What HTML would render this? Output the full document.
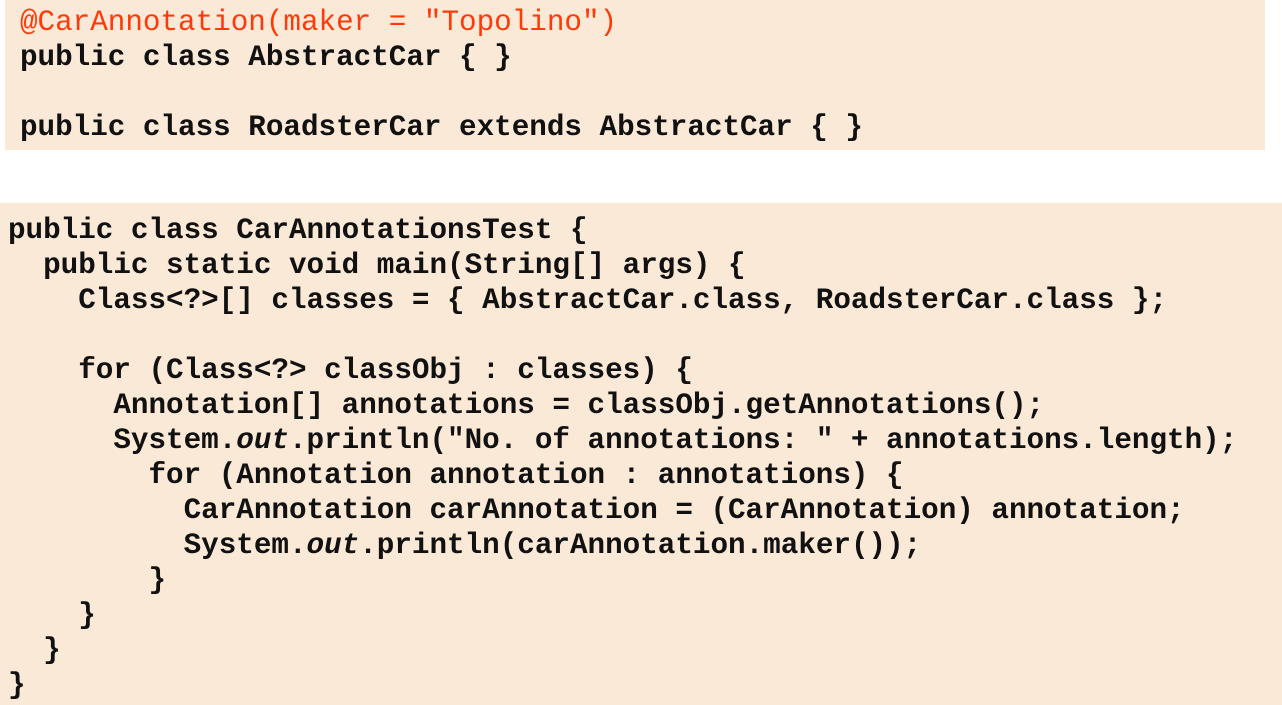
<!DOCTYPE html>
<html><head><style>
html,body{margin:0;padding:0;background:#fff;width:1282px;height:705px;overflow:hidden}
.b{position:absolute;background:#fbe9d8;font-family:"Liberation Mono",monospace;font-weight:bold;font-size:29.3px;line-height:35px;color:#111;white-space:pre;letter-spacing:-0.02px}
#a{left:5px;top:0;width:1260px;height:150px}
#a .t{position:absolute;left:15px;top:5px}
#c{left:0;top:203px;width:1282px;height:502px}
#c .t{position:absolute;left:8px;top:10px}
.r{color:#ff3a0a;font-weight:normal}
i{font-style:italic}
</style></head><body>
<div class="b" id="a"><div class="t"><span class="r">@CarAnnotation(maker = "Topolino")</span>
public class AbstractCar { }

public class RoadsterCar extends AbstractCar { }</div></div>
<div class="b" id="c"><div class="t">public class CarAnnotationsTest {
  public static void main(String[] args) {
    Class&lt;?&gt;[] classes = { AbstractCar.class, RoadsterCar.class };

    for (Class&lt;?&gt; classObj : classes) {
      Annotation[] annotations = classObj.getAnnotations();
      System.<i>out</i>.println("No. of annotations: " + annotations.length);
        for (Annotation annotation : annotations) {
          CarAnnotation carAnnotation = (CarAnnotation) annotation;
          System.<i>out</i>.println(carAnnotation.maker());
        }
    }
  }
}</div></div>
</body></html>
